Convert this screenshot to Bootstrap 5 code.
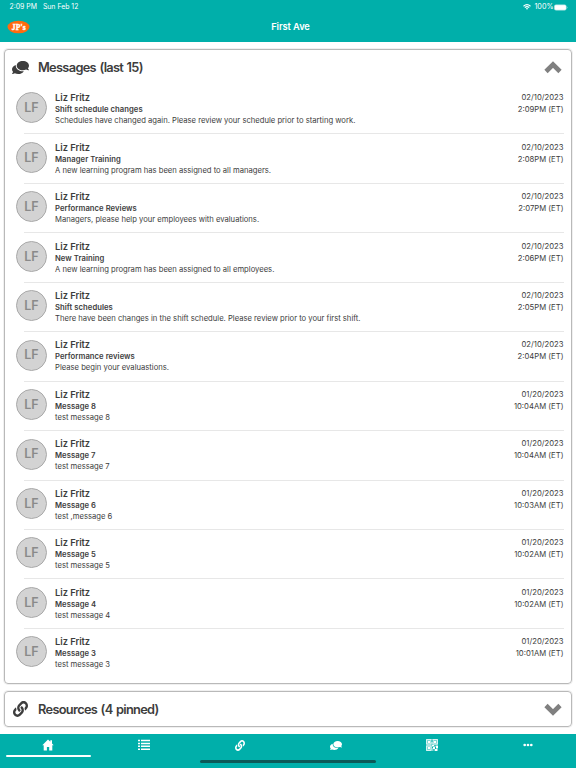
<!DOCTYPE html>
<html lang="en">
<head>
<meta charset="utf-8">
<meta name="viewport" content="width=device-width, initial-scale=1">
<title>First Ave</title>
<link href="https://cdn.jsdelivr.net/npm/bootstrap@5.3.0/dist/css/bootstrap.min.css" rel="stylesheet">
<style>
body{font-family:Inter,"Liberation Sans",sans-serif;color:#3d3d3d;height:768px;overflow:hidden}
svg{display:block;flex:none}
.teal{background:#00afaa;color:#fff}
.app-head{height:42px;flex:none}
.status{height:14px;font-size:6.9px;padding:0 8px 0 9.5px}
.status .clock{margin-right:6px}
.status .battery-text{margin:0 1.5px 0 3px;font-size:7.2px}
.status .battery{margin-left:-1px}
.titlebar{height:26px;display:grid;grid-template-columns:1fr auto 1fr;padding:0 7px 0 7px}
.titlebar h1{font-size:9.3px;font-weight:600;letter-spacing:-.08px;padding-left:5px}
.panel{border:1px solid #b9b9b9;box-shadow:0 0 0 1px #f0f0f0;border-radius:4px;margin:0 4px;flex:none}
.messages{height:635px;margin-top:7px}
.resources{height:36px;margin-top:7px}
.panel-head{padding:0 9px 0 7px}
.messages .panel-head{height:35px}
.panel-head h2{font-size:12.8px;font-weight:600;letter-spacing:-.68px;word-spacing:.9px}
.resources h2{padding-top:1px}
.icon-slot{width:26px}
.msg{height:49.45px;padding:6.2px 7.5px 0 11px;position:relative}
.msg:not(:last-child)::after{content:"";position:absolute;left:19px;right:7px;bottom:0;height:1px;background:#e7e7e7}
.avatar{width:31px;height:31px;border-radius:50%;background:#d3d3d3;border:1px solid #a9a9a9;color:#8a8a8a;font-size:12.5px;font-weight:600;margin:1.3px 8px 0 0;padding-top:1.4px;flex:none}
.who{font-size:9.3px;line-height:13px;font-weight:600;letter-spacing:-.03px}
.subject{font-size:7.65px;line-height:11px;font-weight:600;letter-spacing:.06px}
.preview{font-size:7.65px;line-height:11px}
.when{font-size:7.7px;line-height:12px;padding-top:1px}
.tabs{height:34px;margin-top:7px;flex:none;position:relative}
.tab{height:23px;padding-bottom:2px;border:0;background:none;color:#fff;position:relative}
.tab.active::after{content:"";position:absolute;left:6px;right:5px;bottom:0;height:2px;background:#fff;border-radius:1px}
.home-bar{position:absolute;left:200px;width:176px;bottom:5px;height:3px;border-radius:2px;background:#0c5a58}
</style>
<script src="https://cdn.jsdelivr.net/npm/bootstrap@5.3.0/dist/js/bootstrap.bundle.min.js"></script>
</head>
<body class="d-flex flex-column bg-white">
<svg width="0" height="0" class="position-absolute" aria-hidden="true">
<symbol id="chat" viewBox="0 32 576 448" preserveAspectRatio="none"><path transform="matrix(-1 0 0 1 576 0)" fill="currentColor" d="M416 192c0-88.400-93.100-160-208-160S0 103.600 0 192c0 34.300 14.100 65.900 38 92-13.400 30.200-35.500 54.200-35.800 54.500-2.200 2.300-2.800 5.700-1.500 8.700S4.800 352 8 352c36.600 0 66.900-12.300 88.700-25 32.200 15.700 70.300 25 111.300 25 114.900 0 208-71.600 208-160zm122 220c23.900-26 38-57.700 38-92 0-66.900-53.500-124.200-129.300-148.100.9 6.600 1.300 13.300 1.300 20.100 0 105.900-107.700 192-240 192-10.800 0-21.300-.8-31.700-1.900C207.800 439.600 281.800 480 368 480c41 0 79.100-9.200 111.300-25 21.800 12.700 52.100 25 88.700 25 3.200 0 6.100-1.900 7.300-4.800 1.300-2.900.7-6.300-1.500-8.700-.3-.2-22.400-24.200-35.800-54.500z"/></symbol>
<symbol id="link" viewBox="0 0 512 512" preserveAspectRatio="none"><path fill="currentColor" d="M326.612 185.391c59.747 59.809 58.927 155.698.36 214.590-.11.12-.24.25-.36.37l-67.200 67.200c-59.270 59.270-155.699 59.262-214.960 0-59.270-59.260-59.270-155.700 0-214.960l37.106-37.106c9.840-9.840 26.786-3.300 27.294 10.606.648 17.722 3.826 35.527 9.690 52.721 1.986 5.822.567 12.262-3.783 16.612l-13.087 13.087c-28.026 28.026-28.905 73.660-1.155 101.960 28.024 28.579 74.086 28.749 102.325.51l67.200-67.190c28.191-28.191 28.073-73.757 0-101.830-3.701-3.694-7.429-6.564-10.341-8.569a16.037 16.037 0 0 1-6.947-12.606c-.396-10.567 3.348-21.456 11.698-29.806l21.054-21.055c5.521-5.521 14.182-6.199 20.584-1.731a152.482 152.482 0 0 1 20.522 17.197zM467.547 44.449c-59.261-59.262-155.690-59.270-214.960 0l-67.200 67.200c-.12.12-.25.25-.36.37-58.566 58.892-59.387 154.781.36 214.590a152.454 152.454 0 0 0 20.521 17.196c6.402 4.468 15.064 3.789 20.584-1.731l21.054-21.055c8.350-8.350 12.094-19.239 11.698-29.806a16.037 16.037 0 0 0-6.947-12.606c-2.912-2.005-6.640-4.875-10.341-8.569-28.073-28.073-28.191-73.639 0-101.830l67.200-67.190c28.239-28.239 74.300-28.069 102.325.51 27.750 28.300 26.872 73.934-1.155 101.960l-13.087 13.087c-4.350 4.350-5.769 10.790-3.783 16.612 5.864 17.194 9.042 34.999 9.690 52.721.509 13.906 17.454 20.446 27.294 10.606l37.106-37.106c59.271-59.259 59.271-155.699.001-214.959z"/></symbol>
</svg>

<header class="app-head teal">
  <div class="status d-flex align-items-center">
    <span class="clock">2:09 PM</span><span class="me-auto">Sun Feb 12</span>
    <svg width="8" height="6" viewBox="0 0 16 12" fill="none" stroke="#fff" stroke-width="2.2"><path d="M1 4.500Q8-1.800 15 4.500M3.600 7.200Q8 3.200 12.400 7.200"/><path d="M5.700 9.200Q8 7.200 10.300 9.200L8 11.700Z" fill="#fff" stroke="none"/></svg>
    <span class="battery-text">100%</span>
    <svg class="battery" width="14" height="7" viewBox="0 0 14 7"><rect x=".3" y=".8" width="12" height="5.400" rx="1.600" fill="#fff" stroke="#8ad9d6" stroke-width=".5"/><path d="M13 2.500Q14 3.500 13 4.500Z" fill="#b5e6e4"/></svg>
  </div>
  <div class="titlebar align-items-center">
    <svg width="23" height="14" viewBox="0 0 23 14"><ellipse cx="11.500" cy="7" rx="11" ry="6.300" fill="#ff6b0f"/><text x="11.700" y="9.600" text-anchor="middle" font-family="Liberation Serif,serif" font-weight="700" font-size="7.500" fill="#fff" stroke="#fff" stroke-width=".35" textLength="14">JP's</text></svg>
    <h1 class="m-0">First Ave</h1><span></span>
  </div>
</header>

<section class="panel messages">
  <div class="panel-head d-flex align-items-center">
    <span class="icon-slot"><svg width="17" height="13"><use href="#chat"/></svg></span>
    <h2 class="m-0 me-auto">Messages (last 15)</h2>
    <svg width="18" height="13" viewBox="0 0 18 13"><path d="M2 10.500 9 3.500 16 10.500" fill="none" stroke="#808080" stroke-width="4.600"/></svg>
  </div>
  <div class="list">
    <article class="msg d-flex"><div class="avatar d-flex align-items-center justify-content-center">LF</div><div class="flex-grow-1"><div class="who">Liz Fritz</div><div class="subject">Shift schedule changes</div><div class="preview">Schedules have changed again. Please review your schedule prior to starting work.</div></div><div class="when text-end">02/10/2023<br>2:09PM (ET)</div></article>
    <article class="msg d-flex"><div class="avatar d-flex align-items-center justify-content-center">LF</div><div class="flex-grow-1"><div class="who">Liz Fritz</div><div class="subject">Manager Training</div><div class="preview">A new learning program has been assigned to all managers.</div></div><div class="when text-end">02/10/2023<br>2:08PM (ET)</div></article>
    <article class="msg d-flex"><div class="avatar d-flex align-items-center justify-content-center">LF</div><div class="flex-grow-1"><div class="who">Liz Fritz</div><div class="subject">Performance Reviews</div><div class="preview">Managers, please help your employees with evaluations.</div></div><div class="when text-end">02/10/2023<br>2:07PM (ET)</div></article>
    <article class="msg d-flex"><div class="avatar d-flex align-items-center justify-content-center">LF</div><div class="flex-grow-1"><div class="who">Liz Fritz</div><div class="subject">New Training</div><div class="preview">A new learning program has been assigned to all employees.</div></div><div class="when text-end">02/10/2023<br>2:06PM (ET)</div></article>
    <article class="msg d-flex"><div class="avatar d-flex align-items-center justify-content-center">LF</div><div class="flex-grow-1"><div class="who">Liz Fritz</div><div class="subject">Shift schedules</div><div class="preview">There have been changes in the shift schedule. Please review prior to your first shift.</div></div><div class="when text-end">02/10/2023<br>2:05PM (ET)</div></article>
    <article class="msg d-flex"><div class="avatar d-flex align-items-center justify-content-center">LF</div><div class="flex-grow-1"><div class="who">Liz Fritz</div><div class="subject">Performance reviews</div><div class="preview">Please begin your evaluastions.</div></div><div class="when text-end">02/10/2023<br>2:04PM (ET)</div></article>
    <article class="msg d-flex"><div class="avatar d-flex align-items-center justify-content-center">LF</div><div class="flex-grow-1"><div class="who">Liz Fritz</div><div class="subject">Message 8</div><div class="preview">test message 8</div></div><div class="when text-end">01/20/2023<br>10:04AM (ET)</div></article>
    <article class="msg d-flex"><div class="avatar d-flex align-items-center justify-content-center">LF</div><div class="flex-grow-1"><div class="who">Liz Fritz</div><div class="subject">Message 7</div><div class="preview">test message 7</div></div><div class="when text-end">01/20/2023<br>10:04AM (ET)</div></article>
    <article class="msg d-flex"><div class="avatar d-flex align-items-center justify-content-center">LF</div><div class="flex-grow-1"><div class="who">Liz Fritz</div><div class="subject">Message 6</div><div class="preview">test ,message 6</div></div><div class="when text-end">01/20/2023<br>10:03AM (ET)</div></article>
    <article class="msg d-flex"><div class="avatar d-flex align-items-center justify-content-center">LF</div><div class="flex-grow-1"><div class="who">Liz Fritz</div><div class="subject">Message 5</div><div class="preview">test message 5</div></div><div class="when text-end">01/20/2023<br>10:02AM (ET)</div></article>
    <article class="msg d-flex"><div class="avatar d-flex align-items-center justify-content-center">LF</div><div class="flex-grow-1"><div class="who">Liz Fritz</div><div class="subject">Message 4</div><div class="preview">test message 4</div></div><div class="when text-end">01/20/2023<br>10:02AM (ET)</div></article>
    <article class="msg d-flex"><div class="avatar d-flex align-items-center justify-content-center">LF</div><div class="flex-grow-1"><div class="who">Liz Fritz</div><div class="subject">Message 3</div><div class="preview">test message 3</div></div><div class="when text-end">01/20/2023<br>10:01AM (ET)</div></article>
  </div>
</section>

<section class="panel resources">
  <div class="panel-head d-flex align-items-center h-100">
    <span class="icon-slot"><svg width="16" height="16" viewBox="0 0 16 16"><use href="#link" x="1" width="15" height="16"/></svg></span>
    <h2 class="m-0 me-auto">Resources (4 pinned)</h2>
    <svg width="18" height="13" viewBox="0 0 18 13"><path d="M2 2.500 9 9.500 16 2.500" fill="none" stroke="#808080" stroke-width="4.600"/></svg>
  </div>
</section>

<nav class="tabs teal">
  <div class="row g-0">
    <button class="tab active col d-flex align-items-center justify-content-center" aria-label="Home"><svg width="12" height="12" viewBox="0 0 12 12" fill="#fff"><path d="M6 .5 8.300 2.700V1.200H10V4.400L11.700 6.200H10.300V11.500H7.200V8H4.900V11.500H1.700V6.200H.3Z"/></svg></button>
    <button class="tab col d-flex align-items-center justify-content-center" aria-label="List"><svg width="12" height="12" viewBox="0 0 12 12" fill="#fff"><path d="M0 .8h2v1.500H0zM3 .8h9v1.500H3zM0 3.700h2v1.500H0zM3 3.700h9v1.500H3zM0 6.600h2v1.500H0zM3 6.600h9v1.500H3zM0 9.500h2V11H0zM3 9.500h9V11H3z"/></svg></button>
    <button class="tab col d-flex align-items-center justify-content-center" aria-label="Resources"><svg width="10" height="11"><use href="#link"/></svg></button>
    <button class="tab col d-flex align-items-center justify-content-center" aria-label="Messages"><svg width="12" height="9"><use href="#chat"/></svg></button>
    <button class="tab col d-flex align-items-center justify-content-center" aria-label="QR code"><svg width="12" height="12" viewBox="0 0 12 12"><path fill="#7fd6d3" d="M0 0h12v12H0z"/><path fill="none" stroke="#d8f3f2" d="M.5.5h4.500v4.500H.5zM7 .5h4.500v4.500H7zM.5 7h4.500v4.500H.5z"/><path fill="#fff" d="M2 2h2v2H2zM8 2h2v2H8zM2 8h2v2H2zM6 6h2v1H6zM7 8h2v2H7zM10 7h2v2h-2zM9 10h2v2H9z"/><path fill="#00afaa" d="M5.500 1h1v2h-1zM6 8h1v1H6zM9 8h1v2H9zM7 10.500h1.500v1H7zM8.500 6h1v1h-1z"/></svg></button>
    <button class="tab col d-flex align-items-center justify-content-center" aria-label="More"><svg width="10" height="4" viewBox="0 0 10 4" fill="#fff"><circle cx="1.700" cy="2" r="1.350"/><circle cx="5" cy="2" r="1.350"/><circle cx="8.300" cy="2" r="1.350"/></svg></button>
  </div>
  <div class="home-bar"></div>
</nav>
</body>
</html>
